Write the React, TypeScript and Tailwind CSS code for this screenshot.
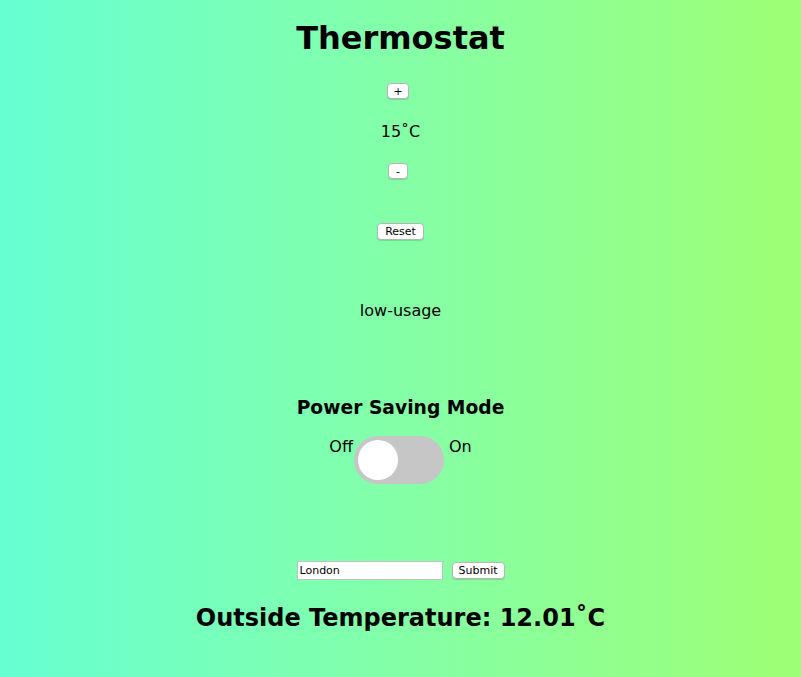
export default function App() {
  const btn =
    "bg-white border border-[#b5b5b5] rounded-[4px] text-[11px] leading-none text-black shadow-[0_1px_1px_rgba(0,0,0,0.15)]";

  return (
    <div
      className="w-full min-h-[677px] bg-gradient-to-r from-[#66ffd2] to-[#9dff73] flex flex-col items-center text-black"
      style={{ fontFamily: '"DejaVu Sans", Verdana, sans-serif' }}
    >
      <h1 className="mt-[20px] h-[37px] leading-[37px] text-[32px] font-bold">Thermostat</h1>

      <button className={`${btn} mt-[26px] mr-[5px] h-[16px] w-[22px]`}>+</button>
      <div className="mt-[23px] h-[20px] leading-[20px] text-[16px]">15˚C</div>
      <button className={`${btn} mt-[21px] mr-[5px] h-[16px] w-[20px]`}>-</button>

      <button className={`${btn} mt-[44px] h-[17px] px-[7px]`}>Reset</button>

      <div className="mt-[61px] h-[20px] leading-[20px] text-[16px]">low-usage</div>

      <h3 className="mt-[75px] h-[24px] leading-[24px] text-[18.72px] font-bold">Power Saving Mode</h3>

      <div className="mt-[16px] flex items-start text-[16px]">
        <span className="mt-[1px] leading-[20px]">Off</span>
        <div className="ml-[1px] relative w-[90px] h-[48px] rounded-full bg-[#c6c6c6]">
          <div className="absolute left-[4px] top-[4px] w-[40px] h-[40px] rounded-full bg-white" />
        </div>
        <span className="mt-[1px] ml-[5px] leading-[20px]">On</span>
      </div>

      <div className="mt-[77px] flex items-center gap-[9px]">
        <input
          defaultValue="London"
          className="w-[146px] h-[19px] bg-white border border-[#c2c2c2] px-[2px] text-[11px] text-black outline-none"
        />
        <button className={`${btn} h-[17px] w-[53px]`}>Submit</button>
      </div>

      <h2 className="mt-[23px] h-[30px] leading-[30px] text-[24px] font-bold">Outside Temperature: 12.01˚C</h2>
    </div>
  );
}
